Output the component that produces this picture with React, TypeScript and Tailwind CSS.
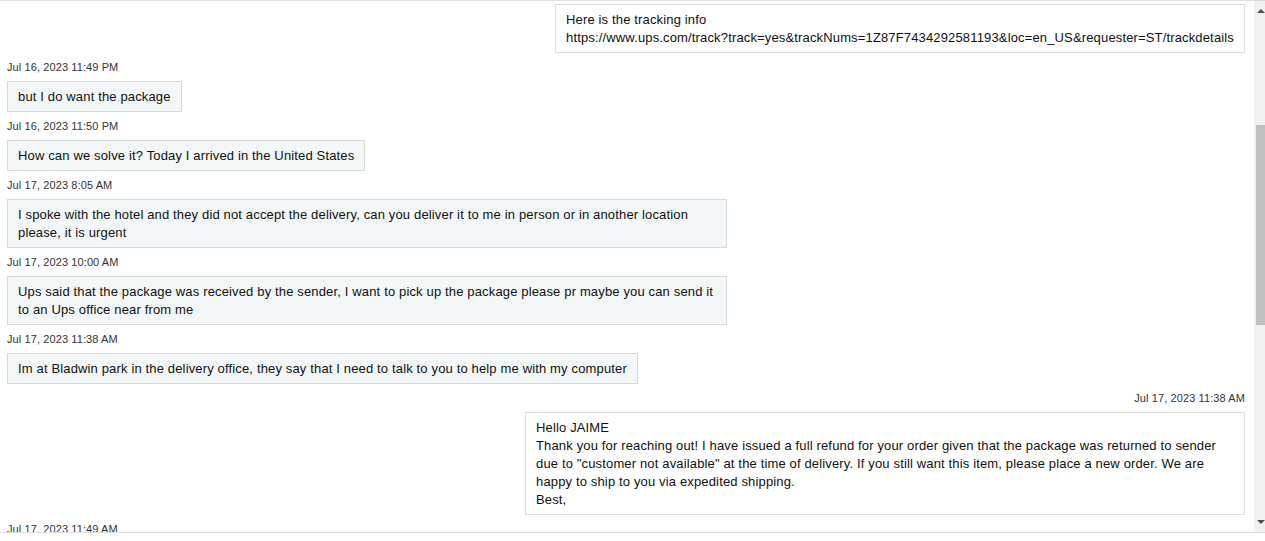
import React from "react"

type Message = {
  from: "buyer" | "seller"
  time?: string
  text: string
}

const messages: Message[] = [
  {
    from: "seller",
    text: "Here is the tracking info\nhttps://www.ups.com/track?track=yes&trackNums=1Z87F7434292581193&loc=en_US&requester=ST/trackdetails",
  },
  { from: "buyer", time: "Jul 16, 2023 11:49 PM", text: "but I do want the package" },
  { from: "buyer", time: "Jul 16, 2023 11:50 PM", text: "How can we solve it? Today I arrived in the United States" },
  {
    from: "buyer",
    time: "Jul 17, 2023 8:05 AM",
    text: "I spoke with the hotel and they did not accept the delivery, can you deliver it to me in person or in another location please, it is urgent",
  },
  {
    from: "buyer",
    time: "Jul 17, 2023 10:00 AM",
    text: "Ups said that the package was received by the sender, I want to pick up the package please pr maybe you can send it to an Ups office near from me",
  },
  {
    from: "buyer",
    time: "Jul 17, 2023 11:38 AM",
    text: "Im at Bladwin park in the delivery office, they say that I need to talk to you to help me with my computer",
  },
  {
    from: "seller",
    time: "Jul 17, 2023 11:38 AM",
    text: 'Hello JAIME\nThank you for reaching out! I have issued a full refund for your order given that the package was returned to sender due to "customer not available" at the time of delivery. If you still want this item, please place a new order. We are happy to ship to you via expedited shipping.\nBest,',
  },
  { from: "buyer", time: "Jul 17, 2023 11:49 AM", text: "" },
]

function Bubble({ msg }: { msg: Message }) {
  const mine = msg.from === "seller"
  return (
    <div className={mine ? "flex flex-col items-end gap-[6px]" : "flex flex-col items-start gap-[6px]"}>
      {msg.time && (
        <div className="h-[16px] text-[11px] leading-[16px] tracking-[0.1px] text-[#333333]">{msg.time}</div>
      )}
      {msg.text && (
        <div
          className={
            mine
              ? "max-w-[720px] whitespace-pre-line border border-[#dddddd] bg-white px-[10px] pt-[6px] pb-[5px] text-[13px] leading-[18px] tracking-[0.15px] text-[#0f1111]"
              : "max-w-[720px] whitespace-pre-line border border-[#d5d9d9] bg-[#f4f7f7] px-[10px] pt-[6px] pb-[5px] text-[13px] leading-[18px] tracking-[0.15px] text-[#0f1111]"
          }
        >
          {msg.text}
        </div>
      )}
    </div>
  )
}

export default function App() {
  return (
    <div
      className="h-[541px] w-full bg-white"
      style={{ fontFamily: '"Liberation Sans", Arial, sans-serif' }}
    >
      <div className="flex h-[533px] border-y border-[#dddddd]">
        {/* conversation */}
        <div className="flex min-w-0 flex-1 flex-col gap-[6px] overflow-hidden pt-[3px] pl-[7px] pr-[9px]">
          {messages.map((m, i) => (
            <Bubble key={i} msg={m} />
          ))}
        </div>

        {/* scrollbar */}
        <div className="flex w-[11px] flex-col bg-[#f1f1f1]">
          <div className="flex h-[20px] items-center justify-center pl-[2px]">
            <div className="h-0 w-0 border-x-[4px] border-b-[4px] border-x-transparent border-b-[#505050]" />
          </div>
          <div className="mt-[104px] ml-[2px] h-[200px] w-[9px] bg-[#c1c1c1]" />
          <div className="flex-1" />
          <div className="flex h-[20px] items-center justify-center pl-[2px]">
            <div className="h-0 w-0 border-x-[4px] border-t-[4px] border-x-transparent border-t-[#505050]" />
          </div>
        </div>
      </div>
    </div>
  )
}
